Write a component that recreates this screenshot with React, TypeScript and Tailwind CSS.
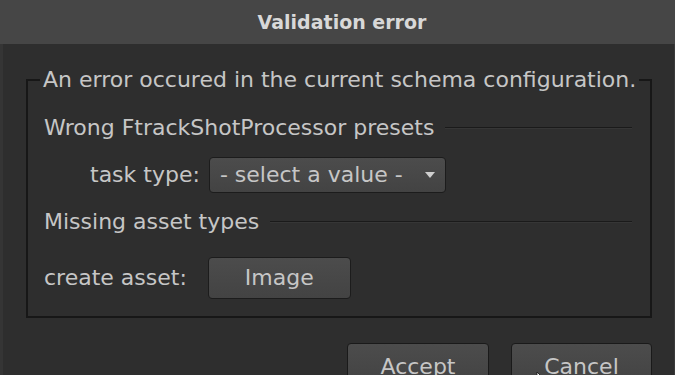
export default function App() {
  return (
    <div
      className="w-[675px] h-[375px] overflow-hidden bg-[#2e2e2e] text-[#c6c6c6] flex flex-col"
      style={{ fontFamily: '"DejaVu Sans", "Liberation Sans", sans-serif' }}
    >
      {/* Title bar */}
      <div className="h-[44px] shrink-0 bg-[#464646] flex items-center justify-center pl-[9px]">
        <span className="text-[19px] font-bold text-[#d8d8d8] leading-none">Validation error</span>
      </div>

      {/* Body */}
      <div className="flex-1 flex flex-col border-l-[3px] border-r border-l-[#353535] border-r-[#3a3a3a] pr-[2px]">
        <fieldset className="min-w-0 ml-[23px] mr-[20px] mt-[23px] border-2 border-[#171717] px-0 pb-[17px] text-[22px] leading-[26px]">
          <legend className="ml-[12px] px-[3px] leading-[26px] whitespace-nowrap">
            An error occured in the current schema configuration.
          </legend>

          {/* Wrong presets section */}
          <div className="mt-[22px] px-[16px] flex items-center h-[26px]">
            <span className="whitespace-nowrap">Wrong FtrackShotProcessor presets</span>
            <div className="flex-1 ml-[11px] mr-[2px] border-t border-b border-t-[#1a1a1a] border-b-[#363636]" />
          </div>

          <div className="mt-[16px] px-[16px] flex items-center">
            <span className="ml-[46px] whitespace-nowrap">task type:</span>
            <div className="ml-[9px] w-[237px] h-[36px] rounded-[4px] border border-[#1c1c1c] bg-gradient-to-b from-[#4c4c4c] to-[#434343] flex items-center pl-[10px] pr-[10px]">
              <span className="flex-1 whitespace-nowrap">- select a value -</span>
              <svg width="10" height="6" viewBox="0 0 10 6">
                <path d="M0 0 L10 0 L5 6 Z" fill="#cfcfcf" />
              </svg>
            </div>
          </div>

          {/* Missing asset section */}
          <div className="mt-[16px] px-[16px] flex items-center h-[26px]">
            <span className="whitespace-nowrap">Missing asset types</span>
            <div className="flex-1 ml-[11px] mr-[2px] border-t border-b border-t-[#1a1a1a] border-b-[#363636]" />
          </div>

          <div className="mt-[22px] px-[16px] flex items-center">
            <span className="whitespace-nowrap">create asset:</span>
            <div className="ml-[21px] w-[143px] h-[42px] rounded-[4px] border border-[#1c1c1c] bg-gradient-to-b from-[#4c4c4c] to-[#434343] flex items-center justify-center">
              Image
            </div>
          </div>
        </fieldset>

        {/* Dialog buttons */}
        <div className="mt-[25px] flex justify-end gap-[22px] pr-[20px] text-[22px]">
          <div className="w-[142px] h-[42px] rounded-[4px] border border-[#1a1a1a] bg-gradient-to-b from-[#4c4c4c] to-[#434343] flex items-center justify-center pt-[4px]">
            Accept
          </div>
          <div className="relative w-[141px] h-[42px] rounded-[4px] border border-[#1a1a1a] bg-gradient-to-b from-[#4c4c4c] to-[#434343] flex items-center justify-center pt-[4px]">
            Cancel
            <svg className="absolute left-[24px] top-[27px]" width="8" height="10" viewBox="0 0 8 10">
              <path d="M1 1 L1 9 L3 7 L7 7 Z" fill="#f0f0f0" stroke="#111" strokeWidth="0.8" />
            </svg>
          </div>
        </div>
      </div>
    </div>
  );
}
